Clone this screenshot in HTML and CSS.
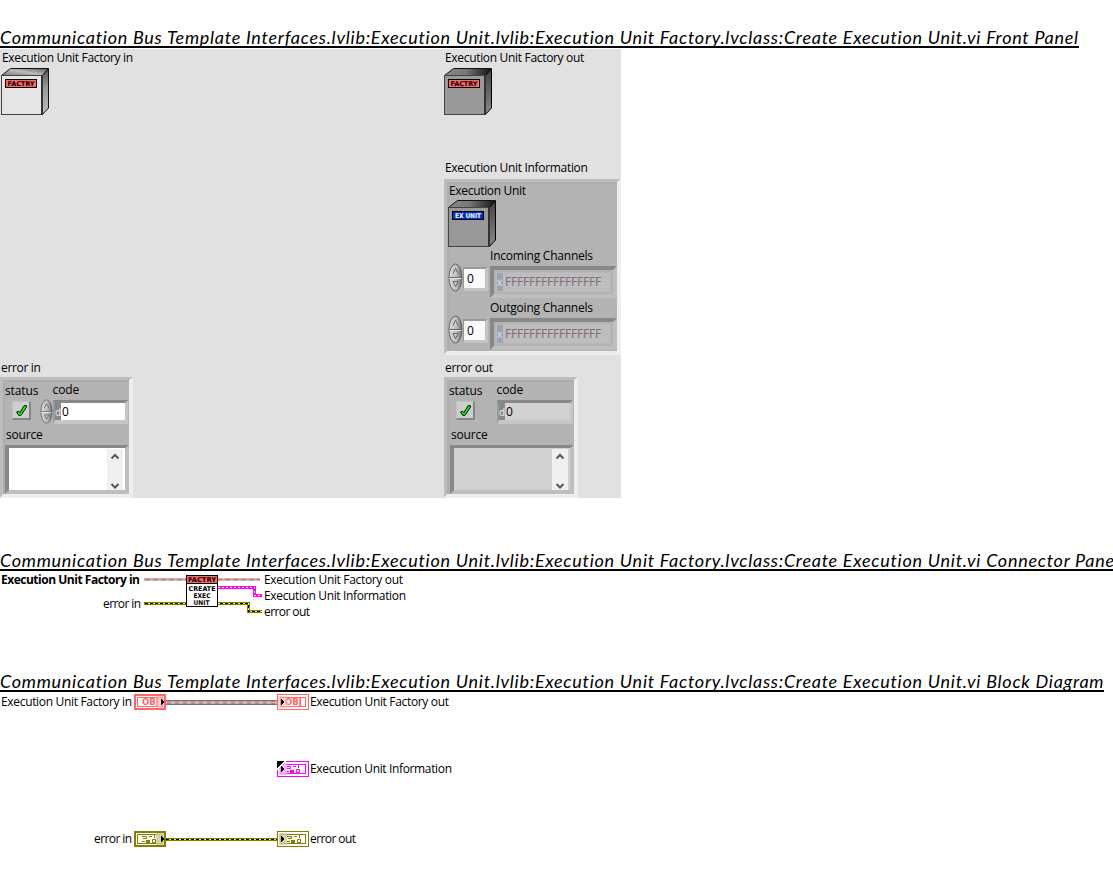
FILE: index.html
```html
<!DOCTYPE html>
<html lang="en">
<head>
<meta charset="utf-8">
<title>Create Execution Unit.vi</title>
<link rel="stylesheet" href="styles.css">
</head>
<body>
<svg class="defs" width="0" height="0">
  <defs>
    <linearGradient id="topface" x1="0" x2="1" y1="1" y2="0"><stop offset="0" stop-color="#777"/><stop offset=".5" stop-color="#bbb"/><stop offset="1" stop-color="#555"/></linearGradient>
    <linearGradient id="topdark" x1="0" x2="1"><stop offset="0" stop-color="#888"/><stop offset=".45" stop-color="#777"/><stop offset="1" stop-color="#111"/></linearGradient>
    <linearGradient id="side" x1="0" x2="0" y1="0" y2="1"><stop offset="0" stop-color="#555"/><stop offset=".4" stop-color="#999"/><stop offset="1" stop-color="#bbb"/></linearGradient>
    <linearGradient id="sidedark" x1="0" x2="0" y1="0" y2="1"><stop offset="0" stop-color="#444"/><stop offset="1" stop-color="#888"/></linearGradient>
    <linearGradient id="knob"><stop offset="0" stop-color="#ddd"/><stop offset=".6" stop-color="#b8b8b8"/><stop offset="1" stop-color="#666"/></linearGradient>
    <symbol id="spinner" viewBox="0 0 14 29">
      <ellipse cx="7" cy="14.5" rx="6.5" ry="13.5" fill="url(#knob)" stroke="#666"/>
      <path d="M1 14.5H13" stroke="#666"/><path d="M1 15.5H13" stroke="#e8e8e8"/>
      <path d="M4.5 10.5L7 5.5L9.5 10.5" fill="#ccc" stroke="#666"/><path d="M4.5 18.5H9.5L7 23.5Z" fill="#ccc" stroke="#666"/>
    </symbol>
    <symbol id="check" viewBox="0 0 12 12"><path d="M1.500 7.500L3 6.500L4.500 8L8.500 1.500H10.500V3L5.500 10.500H3.500Z" fill="#00ff00" stroke="#000" stroke-width=".9"/></symbol>
    <symbol id="clusterglyph" viewBox="0 0 20 9">
      <path d="M10 2.500H13M15.500 1V4M3 7.500H6" stroke="currentColor" fill="none"/>
      <path d="M7 6H11V9H7Z" fill="currentColor"/><path d="M13.500 5.500H16.500V8.500H13.500Z" fill="none" stroke="currentColor"/><path d="M3 2.500H7.500V4.500H4" fill="none" stroke="currentColor"/>
    </symbol>
  </defs>
</svg>

<section class="front">
  <h2 class="t1">Communication Bus Template Interfaces.lvlib:Execution Unit.lvlib:Execution Unit Factory.lvclass:Create Execution Unit.vi Front Panel</h2>
  <div class="panel">
    <div class="control">
      <div class="label in">Execution Unit Factory in</div>
      <svg class="cube" width="49" height="49"><path d="M1.500 8.500L10.500 1.500H48.500L42.500 8.500Z" fill="url(#topface)" stroke="#111"/><path d="M42 9L48.500 2V41L42 48Z" fill="url(#side)" stroke="#111"/><rect x="1.500" y="8.500" width="40" height="39" fill="#e6e6e6" stroke="#444"/><path d="M42 8V48" stroke="#333" stroke-width="2"/><rect x="5.500" y="12.500" width="31" height="8" fill="#ff6666" stroke="#000"/><text x="7.500" y="19" class="pixel" textLength="27" lengthAdjust="spacingAndGlyphs">FACTRY</text></svg>
    </div>
    <div class="control">
      <div class="label">Execution Unit Factory out</div>
      <svg class="cube" width="49" height="49"><path d="M.5 8.500L9.500 1.500H47.500L41.500 8.500Z" fill="url(#topdark)" stroke="#111"/><path d="M41 9L47.500 2V41L41 48Z" fill="url(#sidedark)" stroke="#000"/><rect x=".5" y="8.500" width="40" height="39" fill="#999" stroke="#444"/><path d="M41 8V48" stroke="#333" stroke-width="2"/><rect x="4.500" y="12.500" width="31" height="8" fill="#ff6666" stroke="#000"/><text x="6.500" y="19" class="pixel" textLength="27" lengthAdjust="spacingAndGlyphs">FACTRY</text></svg>
    </div>
    <div></div>
    <div class="control">
      <div class="label">Execution Unit Information</div>
      <div class="cluster info">
        <div class="label unit">Execution Unit</div>
        <svg class="cube" width="49" height="49"><path d="M.5 8.500L9.500 1.500H47.500L41.500 8.500Z" fill="url(#topdark)" stroke="#111"/><path d="M41 9L47.500 2V41L41 48Z" fill="url(#sidedark)" stroke="#000"/><rect x=".5" y="8.500" width="40" height="39" fill="#999" stroke="#444"/><path d="M41 8V48" stroke="#333" stroke-width="2"/><rect x="4.500" y="12.500" width="31" height="8" fill="#0033cc" stroke="#000"/><text x="7" y="19" class="pixel light" textLength="26" lengthAdjust="spacingAndGlyphs">EX UNIT</text></svg>
        <div class="array">
          <div class="label">Incoming Channels</div>
          <div class="row"><svg class="spin" width="15" height="29"><use href="#spinner"/></svg><div class="index">0</div><div class="element"><div class="hex"><span class="radix">x</span><span class="digits">FFFFFFFFFFFFFFFF</span></div></div></div>
        </div>
        <div class="array">
          <div class="label">Outgoing Channels</div>
          <div class="row"><svg class="spin" width="15" height="29"><use href="#spinner"/></svg><div class="index">0</div><div class="element"><div class="hex"><span class="radix">x</span><span class="digits">FFFFFFFFFFFFFFFF</span></div></div></div>
        </div>
      </div>
    </div>
    <div class="control">
      <div class="label">error in</div>
      <div class="cluster error">
        <div class="captions"><span>status</span><span class="up">code</span></div>
        <div class="fields"><div class="led"><svg width="13" height="13"><use href="#check"/></svg></div><svg class="spin small" width="13" height="25"><use href="#spinner"/></svg><div class="code"><span class="d">d</span><span class="value">0</span></div></div>
        <div class="source">source</div>
        <div class="list"><svg class="scroll" width="16" height="41"><path d="M4.500 9.500L8 6L11.500 9.500M4.500 35L8 38.500L11.500 35" fill="none" stroke="#555" stroke-width="2"/></svg></div>
      </div>
    </div>
    <div class="control">
      <div class="label">error out</div>
      <div class="cluster error out">
        <div class="captions"><span>status</span><span class="up">code</span></div>
        <div class="fields"><div class="led"><svg width="13" height="13"><use href="#check"/></svg></div><div class="code"><span class="d">d</span><span class="value">0</span></div></div>
        <div class="source">source</div>
        <div class="list"><svg class="scroll" width="16" height="41"><path d="M4.500 9.500L8 6L11.500 9.500M4.500 35L8 38.500L11.500 35" fill="none" stroke="#555" stroke-width="2"/></svg></div>
      </div>
    </div>
  </div>
</section>

<section class="connector">
  <h2 class="t2">Communication Bus Template Interfaces.lvlib:Execution Unit.lvlib:Execution Unit Factory.lvclass:Create Execution Unit.vi Connector Pane</h2>
  <svg class="diagram" width="460" height="50" viewBox="0 572 460 50">
    <text x="1" y="584" class="bold" textLength="139">Execution Unit Factory in</text>
    <text x="103" y="608" textLength="38">error in</text>
    <text x="264" y="584" textLength="139">Execution Unit Factory out</text>
    <text x="264" y="600" textLength="142">Execution Unit Information</text>
    <text x="264" y="616" textLength="46">error out</text>
    <path class="objwire" d="M144 579.500H260"/><path class="objdash" d="M145 579.500H260"/>
    <path class="errwire" d="M144 603.500H248.500V611.500H262"/><path class="errcore" d="M145 603.500H248.500V611.500H262"/><path class="errdash" d="M145 603.500H248.500V611.500H262"/>
    <path class="pinkwire" d="M218 587.500H254.500V595.500H262"/><path class="pinkdash" d="M218 587.500H254.500V595.500H262"/>
    <rect x="186.500" y="575.500" width="31" height="31" fill="#fff" stroke="#000"/><rect x="187" y="576" width="30" height="7" fill="#ff6666"/><path d="M187 583.500H217" stroke="#000"/>
    <text x="188" y="582" class="pixel" textLength="28" lengthAdjust="spacingAndGlyphs">FACTRY</text><text x="188.500" y="591" class="pixel" textLength="27" lengthAdjust="spacingAndGlyphs">CREATE</text><text x="193.500" y="598" class="pixel" textLength="17" lengthAdjust="spacingAndGlyphs">EXEC</text><text x="193.500" y="605" class="pixel" textLength="16" lengthAdjust="spacingAndGlyphs">UNIT</text>
  </svg>
</section>

<section class="block">
  <h2 class="t3">Communication Bus Template Interfaces.lvlib:Execution Unit.lvlib:Execution Unit Factory.lvclass:Create Execution Unit.vi Block Diagram</h2>
  <svg class="diagram" width="500" height="160" viewBox="0 693 500 160">
    <text x="1" y="706" textLength="131">Execution Unit Factory in</text>
    <text x="310" y="706" textLength="139">Execution Unit Factory out</text>
    <text x="310" y="773" textLength="142">Execution Unit Information</text>
    <text x="94" y="843" textLength="38">error in</text>
    <text x="310" y="843" textLength="46">error out</text>
    <path d="M166 702.500H277" stroke="#777" stroke-width="5"/><path d="M166 702.500H277" stroke="#bbb" stroke-width="3"/><path class="blockdash" d="M167 701.500H277M167 703.500H277"/>
    <rect x="135" y="695" width="30" height="14" fill="#fff" stroke="#ff6666" stroke-width="2"/><rect x="137.500" y="697.500" width="25" height="9" fill="none" stroke="#ff6666"/><text x="142" y="705" class="pixel obj" textLength="17" lengthAdjust="spacingAndGlyphs">OBJ</text><rect x="156" y="696" width="8" height="12" fill="#ffb3b3" opacity=".6"/><path d="M161 699V705L164.500 702Z"/>
    <rect x="277.500" y="694.500" width="31" height="15" fill="#fff" stroke="#ff6666"/><rect x="280.500" y="697.500" width="25" height="9" fill="none" stroke="#ff6666"/><text x="285" y="705" class="pixel obj" textLength="17" lengthAdjust="spacingAndGlyphs">OBJ</text><rect x="278" y="696" width="9" height="12" fill="#ffb3b3" opacity=".6"/><path d="M281 699V705L284.500 702Z"/>
    <rect x="277.500" y="761.500" width="31" height="15" fill="#fff" stroke="#f0f"/><rect x="280.500" y="764.500" width="25" height="9" fill="none" stroke="#f0f"/><svg x="283" y="764" width="20" height="9" color="#f0f"><use href="#clusterglyph"/></svg><rect x="279" y="763" width="8" height="12" fill="#ffaaff" opacity=".8"/><path d="M277 761H285L277 769Z"/><path d="M285.500 761L277 769.500" stroke="#fff"/><path d="M281 766V772L284.500 769Z"/>
    <path class="errwire" d="M166 839.500H277"/><path class="errcore" d="M166 839.500H277"/><path class="errdash" d="M166 839.500H277"/>
    <rect x="135" y="832" width="30" height="14" fill="#fff" stroke="#808000" stroke-width="2"/><rect x="137.500" y="834.500" width="25" height="9" fill="none" stroke="#808000"/><svg x="139" y="834" width="20" height="9" color="#808000"><use href="#clusterglyph"/></svg><rect x="156" y="833" width="8" height="12" fill="#cccc99" opacity=".85"/><path d="M161 836V842L164.500 839Z"/>
    <rect x="277.500" y="831.500" width="31" height="15" fill="#fff" stroke="#808000"/><rect x="280.500" y="834.500" width="25" height="9" fill="none" stroke="#808000"/><svg x="284" y="834" width="20" height="9" color="#808000"><use href="#clusterglyph"/></svg><rect x="279" y="833" width="8" height="12" fill="#cccc99" opacity=".85"/><path d="M281 836V842L284.500 839Z"/>
  </svg>
</section>
</body>
</html>
```
FILE: styles.css
```css
* { box-sizing: border-box; }
body { margin: 0; padding-top: 26px; background: #fff; color: #000; font: 12px/18px "Open Sans", "Noto Sans", sans-serif; letter-spacing: -0.32px; overflow: hidden; }
.defs { display: block; }
svg { display: block; flex: none; }
h2 { width: fit-content; height: 22px; margin: 0 0 1px; border-bottom: 2px solid #000; overflow: hidden; white-space: nowrap; font: italic 400 18px/23px Lato, sans-serif; letter-spacing: 0.73px; }
.front { height: 523px; }
.connector { height: 121px; }

/* Front panel */
.panel { display: grid; grid-template-columns: 444px 177px; grid-template-rows: 110px 200px 139px; width: 621px; height: 449px; background: #e1e1e1; }
.label { height: 18px; padding-left: 1px; white-space: nowrap; }
.label.in { padding-left: 2px; }
.cube { margin-top: 0; }
.cluster { background: #b3b3b3; border: solid; border-width: 3px 4px 4px 3px; border-color: #bdbdbd #eee #eee #bdbdbd; box-shadow: inset 2px 2px 1px #adadad; }
.info { width: 177px; height: 176px; margin-top: 2px; padding-left: 1px; }
.array { height: 52px; }
.array .label { padding-left: 42px; height: 17px; letter-spacing: -0.22px; }
.info .cube { margin-top: -1px; margin-bottom: -1px; }
.row { display: flex; align-items: flex-start; }
.spin { margin-top: -1px; }
.index { width: 25px; height: 24px; margin: 3px 2px 0 0; padding-left: 3px; line-height: 20px; background: #fafafa; border: solid; border-width: 2px 3px 3px 1px; border-color: #999 #c4c4c4 #c4c4c4 #999; }
.element { width: 127px; height: 32px; margin-top: 2px; padding: 2px; background: #b3b3b3; border: solid; border-width: 4px; border-color: #888 #bebebe #bebebe #888; }
.hex { display: flex; height: 20px; line-height: 18px; color: #806b7c; background: #bebebe; border: 1px solid #b8b8b8; }
.radix { width: 6px; color: #dce3ec; background: #9ba5b2; font-size: 10px; }
.digits { padding-left: 2px; letter-spacing: -0.2px; }

/* Error clusters */
.error { width: 133px; height: 121px; }
.captions { display: flex; height: 20px; padding: 2px 0 0 2px; }
.captions span { letter-spacing: -0.1px; }
.captions span:first-child { width: 48px; }
.captions .up { margin-top: -1px; margin-left: -0.5px; }
.fields { display: flex; height: 26px; align-items: flex-start; padding-left: 9px; }
.led { display: grid; place-items: center; width: 19px; height: 19px; margin-top: 1px; background: #cdcdcd; border: solid; border-width: 1px 2px 2px 1px; border-color: #c0c0c0 #858585 #858585 #c0c0c0; }
.small { margin: -1px 0 0 9px; }
.code { display: flex; flex: 1; height: 24px; margin-right: 1px; border: solid; border-width: 3px 3px 4px 2px; border-color: #888 #c6c6c6 #c6c6c6 #9a9a9a; line-height: 18px; }
.d { width: 6px; background: #888; color: #eee; font-size: 10px; }
.value { flex: 1; padding-left: 1px; background: #fff; }
.source { height: 19px; padding: 0 0 0 3px; letter-spacing: -0.2px; }
.list { display: flex; justify-content: flex-end; width: 124px; height: 49px; margin-left: 2px; padding: 1px 2px 1px 1px; background: #fff; border: solid; border-width: 3px 4px 4px 4px; border-color: #888 #bebebe #bebebe #888; }
.scroll { background: #f0f0f0; }
.out { width: 134px; }
.out .code { margin-left: 22px; }
.out .value, .out .list { background: #d2d2d2; }
.out .list { width: 124px; margin-left: 3px; }
.out .source { padding-left: 4px; }

/* Diagrams */
.diagram { overflow: visible; }
.diagram text { font-size: 12px; letter-spacing: 0; }
.diagram .bold { font-weight: 700; }
.pixel, .diagram .pixel { font: 700 6.5px "DejaVu Sans", sans-serif; letter-spacing: 0; }
.light { fill: #fff; }
.diagram .obj { font-size: 8px; fill: #ff6666; }
.diagram path { shape-rendering: crispEdges; }
.objwire, .errwire, .pinkwire, .errcore, .objdash, .errdash, .pinkdash, .blockdash { fill: none; }
.objwire { stroke: #bbb; stroke-width: 3; }
.objdash { stroke: #ff5555; stroke-width: 1; stroke-dasharray: 5 3; }
.blockdash { stroke: #e06a6a; stroke-dasharray: 4 4; }
.errwire { stroke: #808000; stroke-width: 3; }
.errcore { stroke: #ffff00; }
.errdash { stroke: #000; stroke-dasharray: 3 2; }
.pinkwire { stroke: #f0f; stroke-width: 3; }
.pinkdash { stroke: #fff; stroke-dasharray: 2 2; }
```
